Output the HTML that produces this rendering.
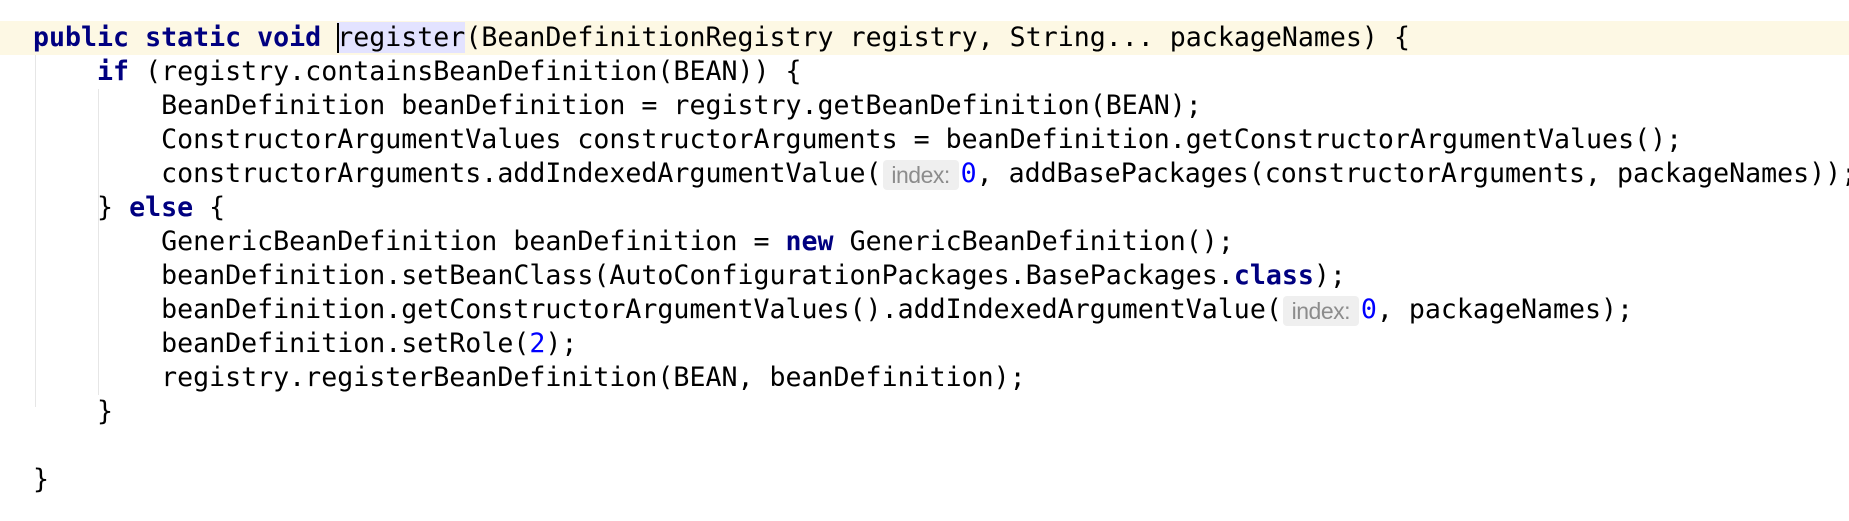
<!DOCTYPE html>
<html><head><meta charset="utf-8"><style>
html,body{margin:0;padding:0;background:#fff;width:1849px;height:521px;overflow:hidden;position:relative}
.l{position:absolute;left:0;height:34px;line-height:34px;white-space:pre;font-family:"DejaVu Sans Mono","Liberation Mono",monospace;font-size:26.6px;color:#000;padding-left:33px;width:1816px}
.k{color:#000080;font-weight:bold}
.n{color:#0000ff}
.h{display:inline-block;width:76px;height:30px;line-height:30px;vertical-align:middle;margin:0 2px 0 1px;background:#efefef;border-radius:4px;color:#8c8c8c;font-family:"Liberation Sans",sans-serif;font-size:23px;text-align:center;letter-spacing:-0.5px}
.cur{position:absolute;left:337px;top:23px;width:2px;height:30px;background:#000}
.sel{background:#e3e3ff}
.g{position:absolute;width:1px;background:#e6e6e6}
</style></head><body>
<div style="position:absolute;left:0;top:21px;width:1849px;height:34px;background:#fdf8e4"></div>
<div class="g" style="left:35px;top:55px;height:352px"></div>
<div class="g" style="left:98px;top:89px;height:306px"></div>
<div class="l" style="top:21px"><span class="k">public static void </span><span class="sel">register</span>(BeanDefinitionRegistry registry, String... packageNames) {</div>
<div class="cur"></div>
<div class="l" style="top:55px">    <span class="k">if</span> (registry.containsBeanDefinition(BEAN)) {</div>
<div class="l" style="top:89px">        BeanDefinition beanDefinition = registry.getBeanDefinition(BEAN);</div>
<div class="l" style="top:123px">        ConstructorArgumentValues constructorArguments = beanDefinition.getConstructorArgumentValues();</div>
<div class="l" style="top:157px">        constructorArguments.addIndexedArgumentValue(<span class="h">index:</span><span class="n">0</span>, addBasePackages(constructorArguments, packageNames));</div>
<div class="l" style="top:191px">    } <span class="k">else</span> {</div>
<div class="l" style="top:225px">        GenericBeanDefinition beanDefinition = <span class="k">new</span> GenericBeanDefinition();</div>
<div class="l" style="top:259px">        beanDefinition.setBeanClass(AutoConfigurationPackages.BasePackages.<span class="k">class</span>);</div>
<div class="l" style="top:293px">        beanDefinition.getConstructorArgumentValues().addIndexedArgumentValue(<span class="h">index:</span><span class="n">0</span>, packageNames);</div>
<div class="l" style="top:327px">        beanDefinition.setRole(<span class="n">2</span>);</div>
<div class="l" style="top:361px">        registry.registerBeanDefinition(BEAN, beanDefinition);</div>
<div class="l" style="top:395px">    }</div>
<div class="l" style="top:463px">}</div>
</body></html>
